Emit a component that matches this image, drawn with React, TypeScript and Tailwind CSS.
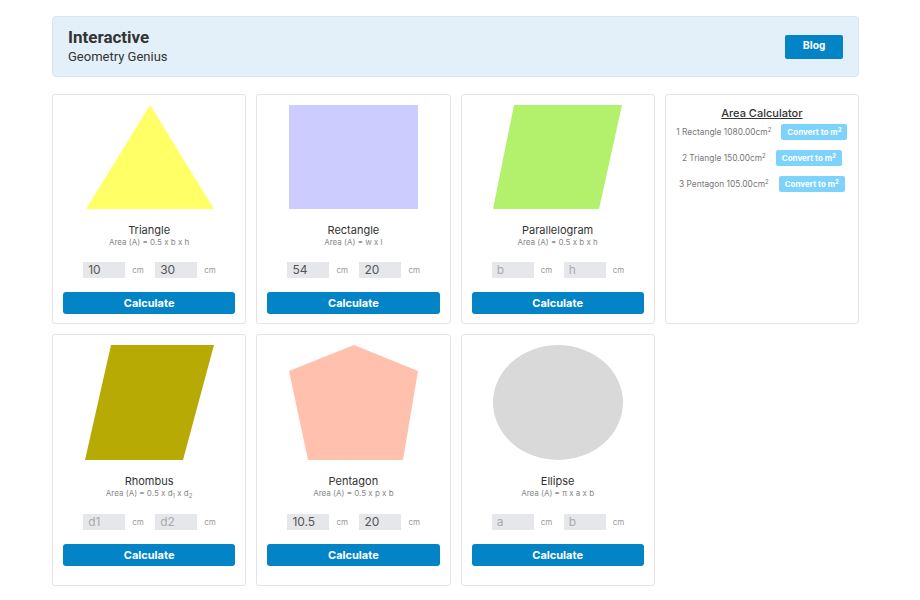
import React from "react";

type Shape = {
  name: string;
  formula: React.ReactNode;
  a: string;
  b: string;
  pa: string;
  pb: string;
  h: number;
  draw: React.ReactNode;
};

const row1: Shape[] = [
  {
    name: "Triangle",
    formula: "Area (A) = 0.5 x b x h",
    a: "10",
    b: "30",
    pa: "b",
    pb: "h",
    h: 104,
    draw: <polygon points="2,104 66,0 130,104" fill="#ffff66" />,
  },
  {
    name: "Rectangle",
    formula: "Area (A) = w x l",
    a: "54",
    b: "20",
    pa: "w",
    pb: "l",
    h: 104,
    draw: <rect x="1" y="0" width="129" height="104" fill="#ccccff" />,
  },
  {
    name: "Parallelogram",
    formula: "Area (A) = 0.5 x b x h",
    a: "",
    b: "",
    pa: "b",
    pb: "h",
    h: 104,
    draw: <polygon points="22,0 130,0 107,104 1,104" fill="#b3f06b" />,
  },
];

const row2: Shape[] = [
  {
    name: "Rhombus",
    formula: (
      <>
        Area (A) = 0.5 x d<sub className="text-[6px]">1</sub> x d
        <sub className="text-[6px]">2</sub>
      </>
    ),
    a: "",
    b: "",
    pa: "d1",
    pb: "d2",
    h: 115,
    draw: <polygon points="27,0 130,0 99,115 1,115" fill="#b8aa04" />,
  },
  {
    name: "Pentagon",
    formula: "Area (A) = 0.5 x p x b",
    a: "10.5",
    b: "20",
    pa: "p",
    pb: "b",
    h: 115,
    draw: <polygon points="66,0 130,26 115,115 20,115 1,26" fill="#ffc1ae" />,
  },
  {
    name: "Ellipse",
    formula: "Area (A) = π x a x b",
    a: "",
    b: "",
    pa: "a",
    pb: "b",
    h: 115,
    draw: <ellipse cx="66" cy="57.5" rx="65" ry="57.5" fill="#d9d9d9" />,
  },
];

const results = ["1 Rectangle 1080.00cm", "2 Triangle 150.00cm", "3 Pentagon 105.00cm"];

const ShapeCard = ({ s, tall }: { s: Shape; tall?: boolean }) => (
  <div
    className={`flex flex-col items-center rounded-[3px] border border-[#e4e4e4] bg-white px-[10px] pt-[10px] ${tall ? "pb-[19px]" : "pb-[9px]"}`}
  >
    <svg width="131" height={s.h} viewBox={`0 0 131 ${s.h}`}>
      {s.draw}
    </svg>
    <h3 className="mt-[14px] text-[11px] leading-[14px] text-[#333]">{s.name}</h3>
    <p className="text-[8px] leading-[10px] text-[#888]">{s.formula}</p>
    <div className={`${tall ? "mt-[16px]" : "mt-[15px]"} flex items-center gap-[12px]`}>
      {[
        [s.a, s.pa],
        [s.b, s.pb],
      ].map(([v, p], i) => (
        <div key={i} className="flex items-center gap-[7px]">
          <input
            defaultValue={v}
            placeholder={p}
            className="h-[16px] w-[42px] bg-[#e5e7eb] px-[5px] text-[12px] text-[#555] outline-none placeholder:text-[#aaa]"
          />
          <span className="w-[11px] text-[8px] text-[#999]">cm</span>
        </div>
      ))}
    </div>
    <button className="mt-[14px] h-[22px] w-full rounded-[3px] bg-[#0284c7] text-[11px] font-bold text-white">
      Calculate
    </button>
  </div>
);

export default function App() {
  return (
    <div className="min-h-screen bg-white font-['Inter',sans-serif]">
      <div className="ml-[52px] w-[807px] pt-4">
        <header className="flex h-[61px] items-center justify-between rounded-[4px] border border-[#d4e6f4] bg-[#e3f0fa] pl-[15px] pr-[15px] font-['Roboto',sans-serif]">
          <div className="-mt-[2px]">
            <h1 className="text-[17px] font-bold leading-[22px] text-[#333]">Interactive</h1>
            <p className="text-[13px] leading-[18px] text-[#333]">Geometry Genius</p>
          </div>
          <button className="h-[24px] w-[58px] rounded-[2px] bg-[#0284c7] text-[11px] font-bold text-white">
            Blog
          </button>
        </header>

        <div className="mt-[17px] grid grid-cols-4 gap-[10px]">
          {row1.map((s) => (
            <ShapeCard key={s.name} s={s} />
          ))}
          <div className="flex flex-col items-center rounded-[3px] border border-[#e4e4e4] bg-white pt-[11px]">
            <h2 className="text-[11px] font-medium leading-[14px] text-[#333] underline">
              Area Calculator
            </h2>
            <div className="mt-[4px] flex flex-col items-center gap-[10px]">
              {results.map((r) => (
                <div key={r} className="flex items-center gap-[10px]">
                  <span className="text-[8.4px] text-[#777]">
                    {r}
                    <sup className="text-[6px]">2</sup>
                  </span>
                  <button className="h-[16px] rounded-[2px] bg-[#7dd3fc] px-[6px] text-[8px] font-bold text-white">
                    Convert to m<sup className="text-[6px]">2</sup>
                  </button>
                </div>
              ))}
            </div>
          </div>
          {row2.map((s) => (
            <ShapeCard key={s.name} s={s} tall />
          ))}
        </div>
      </div>
    </div>
  );
}
